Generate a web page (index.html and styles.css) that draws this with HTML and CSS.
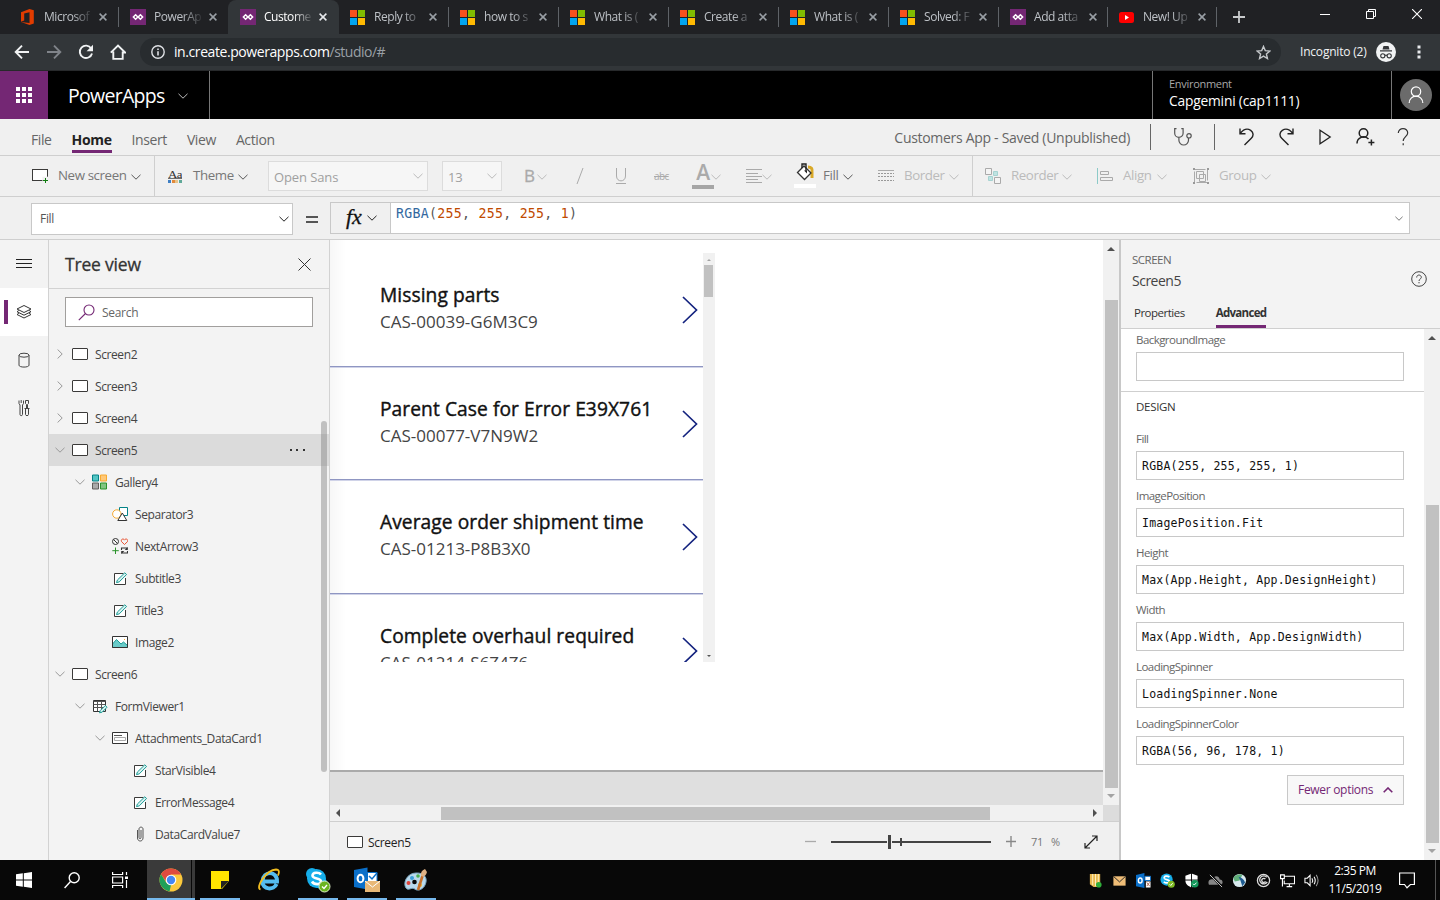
FILE: index.html
```html
<!DOCTYPE html>
<html lang="en">
<head>
<meta charset="utf-8">
<title>Customers App - PowerApps</title>
<link rel="stylesheet" href="styles.css">
</head>
<body>
<svg class="defs" width="0" height="0">
  <symbol id="chev" viewBox="0 0 10 6"><path d="M.5 .8 5 5.2 9.5 .8" fill="none" stroke="currentColor"/></symbol>
  <symbol id="right" viewBox="0 0 6 10"><path d="M.6 .5 5.2 5 .6 9.5" fill="none" stroke="currentColor"/></symbol>
  <symbol id="x" viewBox="0 0 8 8"><path d="M.6 .6 7.4 7.4M7.4 .6 .6 7.4" fill="none" stroke="currentColor" stroke-width="1.5"/></symbol>
  <symbol id="ms" viewBox="0 0 15 15"><path fill="#f8501d" d="M0 0h7v7H0z"/><path fill="#80bb01" d="M8 0h7v7H8z"/><path fill="#02a4ef" d="M0 8h7v7H0z"/><path fill="#ffb902" d="M8 8h7v7H8z"/></symbol>
  <symbol id="pa" viewBox="0 0 16 16"><path fill="#742774" d="M0 0h16v16H0z"/><path d="M5.6 5.8 7.8 8 5.6 10.2 3.4 8zM10.4 5.8 12.6 8 10.4 10.2 8.2 8z" fill="none" stroke="#fff" stroke-width="1.5"/></symbol>
  <symbol id="screen" viewBox="0 0 16 12"><rect x=".5" y=".5" width="15" height="11" rx=".5" fill="#fff" stroke="#3b3a39"/></symbol>
  <symbol id="edit" viewBox="0 0 14 14"><path d="M9.5 1.500H.5v11h11V6" fill="#fff" stroke="#3b3a39"/><path d="M2.500 10.600 3.400 8 10.800.8l1.800 1.700L5.200 9.900z" fill="#d8f0ef" stroke="#1a9c96"/></symbol>
  <symbol id="up" viewBox="0 0 8 4"><path d="M4 0l4 4H0z" fill="currentColor"/></symbol>
</svg>

<div class="tabs">
  <div class="tab"><svg class="fav" viewBox="0 0 16 16"><path d="M1 3.3 9.5 0l4.3 1.3v13.2L9.5 16 1 12.9l8.5 1V3.2L4.2 4.5v7L1 12.8z" fill="#e23c00"/></svg><span class="tt">Microsof</span><svg class="tx"><use href="#x"/></svg></div>
  <div class="tab nosep"><svg class="fav"><use href="#pa"/></svg><span class="tt">PowerAp</span><svg class="tx"><use href="#x"/></svg></div>
  <div class="tab nosep active"><svg class="fav"><use href="#pa"/></svg><span class="tt">Custome</span><svg class="tx"><use href="#x"/></svg></div>
  <div class="tab"><svg class="fav ms"><use href="#ms"/></svg><span class="tt">Reply to</span><svg class="tx"><use href="#x"/></svg></div>
  <div class="tab"><svg class="fav ms"><use href="#ms"/></svg><span class="tt">how to s</span><svg class="tx"><use href="#x"/></svg></div>
  <div class="tab"><svg class="fav ms"><use href="#ms"/></svg><span class="tt">What is (</span><svg class="tx"><use href="#x"/></svg></div>
  <div class="tab"><svg class="fav ms"><use href="#ms"/></svg><span class="tt">Create a</span><svg class="tx"><use href="#x"/></svg></div>
  <div class="tab"><svg class="fav ms"><use href="#ms"/></svg><span class="tt">What is (</span><svg class="tx"><use href="#x"/></svg></div>
  <div class="tab"><svg class="fav ms"><use href="#ms"/></svg><span class="tt">Solved: F</span><svg class="tx"><use href="#x"/></svg></div>
  <div class="tab tight"><svg class="fav"><use href="#pa"/></svg><span class="tt">Add atta</span><svg class="tx"><use href="#x"/></svg></div>
  <div class="tab tight"><svg class="fav yt" viewBox="0 0 15 11"><rect width="15" height="11" rx="2.5" fill="#f00"/><path d="M6 3v5l4-2.5z" fill="#fff"/></svg><span class="tt">New! Up</span><svg class="tx"><use href="#x"/></svg></div>
  <svg class="plus" viewBox="0 0 12 12"><path d="M6 0v12M0 6h12" stroke="#c8cacc" stroke-width="1.8"/></svg>
  <div class="win">
    <svg width="10" height="10"><path d="M0 5.5h10" stroke="#fff"/></svg>
    <svg width="10" height="10"><path d="M.5 2.5h7v7h-7zM2.5 2.5v-2h7v7h-2" fill="none" stroke="#fff"/></svg>
    <svg width="10" height="10"><path d="M0 0l10 10M10 0L0 10" stroke="#fff" stroke-width="1.1"/></svg>
  </div>
</div>

<div class="addr">
  <svg class="nav" viewBox="0 0 16 16"><path d="M15 8H2M8 1.7 1.7 8 8 14.3" fill="none" stroke="#f1f3f4" stroke-width="1.9"/></svg>
  <svg class="nav" viewBox="0 0 16 16"><path d="M1 8h13M8 1.7 14.3 8 8 14.3" fill="none" stroke="#80848a" stroke-width="1.9"/></svg>
  <svg class="nav" viewBox="0 0 16 16"><path d="M13.2 4.4A6.2 6.2 0 1 0 14 9.4" fill="none" stroke="#f1f3f4" stroke-width="1.9"/><path d="M15 .8v6.4H8.6z" fill="#f1f3f4"/></svg>
  <svg class="nav" viewBox="0 0 16 16"><path d="M3.3 7.5v7.4h9.4V7.5M.8 8.6 8 1.5l7.2 7.1h-3" fill="none" stroke="#f1f3f4" stroke-width="1.9"/></svg>
  <div class="omni">
    <svg width="14" height="14" viewBox="0 0 14 14"><circle cx="7" cy="7" r="6.2" fill="none" stroke="#dfe1e5" stroke-width="1.4"/><path d="M7 6.2v4.2M7 3.4V5" stroke="#dfe1e5" stroke-width="1.6"/></svg>
    <span class="url">in.create.powerapps.com<i>/studio/#</i></span>
    <svg class="star" width="15" height="15" viewBox="0 0 16 16"><path d="M8 1.5 9.9 6l4.9.4-3.7 3.2 1.1 4.8L8 11.9l-4.2 2.5 1.1-4.8L1.2 6.4 6.1 6z" fill="none" stroke="#c4c7ca" stroke-width="1.5"/></svg>
  </div>
  <span class="incog">Incognito (2)</span>
  <svg class="spy" width="20" height="20" viewBox="0 0 20 20"><circle cx="10" cy="10" r="10" fill="#f1f3f4"/><path d="M7.5 4h5l1 3.5h-7zM4 8.3h12v1.3H4z" fill="#35373a"/><g fill="none" stroke="#35373a" stroke-width="1.1"><circle cx="6.8" cy="13.8" r="2.1"/><circle cx="13.2" cy="13.8" r="2.1"/><path d="M8.9 13.5q1.1-.8 2.2 0"/></g></svg>
  <svg class="dots" width="4" height="14"><path d="M.5.5h3v3h-3zM.5 5.5h3v3h-3zM.5 10.5h3v3h-3z" fill="#e8eaed"/></svg>
</div>

<div class="head">
  <div class="waffle"><svg width="16" height="16"><path d="M0 0h4v4H0zM6 0h4v4H6zM12 0h4v4h-4zM0 6h4v4H0zM6 6h4v4H6zM12 6h4v4h-4zM0 12h4v4H0zM6 12h4v4H6zM12 12h4v4h-4z" fill="#fff"/></svg></div>
  <div class="brand"><span>PowerApps</span><svg class="chev"><use href="#chev"/></svg></div>
  <div class="env"><span class="el">Environment</span><span class="ev">Capgemini (cap1111)</span></div>
  <div class="user"><svg width="32" height="32" viewBox="0 0 32 32"><circle cx="16" cy="16" r="16" fill="#6b6b6b"/><circle cx="16" cy="12.6" r="4.7" fill="none" stroke="#fff" stroke-width="1.2"/><path d="M9.2 24a6.8 6.8 0 0 1 13.6 0" fill="none" stroke="#fff" stroke-width="1.2"/></svg></div>
</div>

<div class="menu">
  <span>File</span><span class="on">Home</span><span>Insert</span><span>View</span><span>Action</span>
  <span class="saved">Customers App - Saved (Unpublished)</span>
  <div class="health"><svg width="20" height="20" viewBox="0 0 20 20" fill="none" stroke="#555" stroke-width="1.2"><path d="M3.5 1.7H1.7v4.5a4.2 4.2 0 0 0 8.4 0V1.7H8.3M5.9 10.5v2.7a4.8 4.8 0 0 0 9.6 0V11"/><circle cx="16" cy="8.8" r="2.2"/></svg></div>
  <div class="acts">
    <svg width="18" height="20" viewBox="0 0 18 20"><path d="M2 1.5v5.2h5.5M2.3 6.3C5 2.9 9 1 12.7 3.3c3 2 3 5.6.6 8L6.5 18" fill="none" stroke="#222" stroke-width="1.4"/></svg>
    <svg width="18" height="20" viewBox="0 0 18 20"><path d="M16 1.5v5.2h-5.5M15.7 6.3C13 2.9 9 1 5.3 3.3c-3 2-3 5.6-.6 8l6.8 6.7" fill="none" stroke="#222" stroke-width="1.4"/></svg>
    <svg width="18" height="20" viewBox="0 0 18 20"><path d="M4 3.2 14.2 10 4 16.8z" fill="none" stroke="#222" stroke-width="1.3"/></svg>
    <svg width="20" height="20" viewBox="0 0 20 20"><circle cx="8.500" cy="6" r="4.300" fill="none" stroke="#222" stroke-width="1.500"/><path d="M2 16.500a6.600 6.600 0 0 1 11.500-4.400M16.400 12.500v6M13.400 15.500h6" fill="none" stroke="#222" stroke-width="1.500"/></svg>
    <svg width="14" height="20" viewBox="0 0 14 20"><path d="M2.300 6c0-6 9.600-5.600 9.400 0-.1 3.400-4.500 4-4.500 8M7.200 16.300v2" fill="none" stroke="#333" stroke-width="1.200"/></svg>
  </div>
</div>

<div class="ribbon">
  <div class="g sep"><svg class="ic" viewBox="0 0 16 14"><rect x=".5" y=".5" width="15" height="11" fill="#fff" stroke="#3b3a39"/><path d="M10.400 7.700h6v6h-6z" fill="#f0f0f0"/><path d="M13.500 9v5M11 11.500h5" stroke="#107c10"/></svg><span style="width:73px">New screen</span><svg class="chev"><use href="#chev"/></svg></div>
  <div class="g pad13"><svg class="aa" viewBox="0 0 14 14"><text x="0" y="9" font-size="10.500" font-family="Liberation Serif, serif" fill="#333" textLength="14" lengthAdjust="spacingAndGlyphs">Aa</text><path d="M0 9.500h14" stroke="#333" stroke-width=".7"/><path fill="#3f7fc4" d="M0 11h3v3H0z"/><path fill="#e28a3c" d="M4 11h3v3H4z"/><path fill="#e8c48a" d="M7 11h3v3H7z"/><path fill="#5fa898" d="M11 11h3v3h-3z"/></svg><span style="width:45px">Theme</span><svg class="chev"><use href="#chev"/></svg></div>
  <div class="g"><div class="sel s1"><span>Open Sans</span><svg class="chev"><use href="#chev"/></svg></div></div>
  <div class="g"><div class="sel s2"><span>13</span><svg class="chev"><use href="#chev"/></svg></div></div>
  <div class="g dis"><b class="bold">B</b><svg class="chev"><use href="#chev"/></svg></div>
  <div class="g dis"><svg width="12" height="18"><path d="M9 1 3 17" stroke="#aaa"/></svg></div>
  <div class="g dis"><svg width="14" height="18"><path d="M2.500 1v8c0 6.500 9 6.500 9 0V1M2 16.500h10" fill="none" stroke="#aaa"/></svg></div>
  <div class="g dis"><s>abc</s></div>
  <div class="g dis"><div class="fc">A</div><svg class="chev neg"><use href="#chev"/></svg></div>
  <div class="g dis"><svg width="16" height="14"><path d="M0 .5h16M0 4.500h12M0 7.500h16M0 10.500h12M0 13.500h16" stroke="#aaa"/></svg><svg class="chev"><use href="#chev"/></svg></div>
  <div class="g"><svg class="bucket" width="22" height="26" viewBox="0 0 22 26"><path d="M14 5q5 0 4 5v6" fill="none" stroke="#d9a928" stroke-width="3"/><path d="M3.500 10.500 10 4l7 7-6.500 6.500z" fill="#fff" stroke="#333" stroke-width="1.300"/><path d="M8 6V2h4v7" fill="none" stroke="#222" stroke-width="1.400"/><path d="M10 8.500h3v3z" fill="#222"/><path d="M0 22h22v4H0z" fill="#fff"/></svg><span style="width:20px">Fill</span><svg class="chev"><use href="#chev"/></svg></div>
  <div class="g dis sep"><svg class="ic" viewBox="0 0 16 12"><path d="M0 .5h16" stroke="#aaa"/><path d="M0 3.500h16M0 6.500h16M0 10.500h16" stroke="#999" stroke-dasharray="2 1"/></svg><span style="width:45px">Border</span><svg class="chev"><use href="#chev"/></svg></div>
  <div class="g dis pad12"><svg class="ic" viewBox="0 0 16 16"><path fill="#bfe3e2" stroke="#a6d3d1" d="M8.500 3.500h4v4h-4zM3.500 8.500h4v4h-4z"/><path fill="#f4f4f4" stroke="#aaa" d="M.5.5h6v6h-6zM9.500 9.500h6v6h-6z"/></svg><span style="width:51px">Reorder</span><svg class="chev"><use href="#chev"/></svg></div>
  <div class="g dis"><svg class="ic" viewBox="0 0 16 16"><path d="M.5 0v16" stroke="#8ccac8"/><path fill="none" stroke="#aaa" d="M3.500 3.500h8v3h-8zM3.500 9.500h12v3h-12z"/></svg><span style="width:34px">Align</span><svg class="chev"><use href="#chev"/></svg></div>
  <div class="g dis"><svg class="ic" viewBox="0 0 16 16"><path fill="none" stroke="#aaa" d="M1.500 1.500h13v13h-13z" stroke-dasharray="11 2"/><path fill="none" stroke="#aaa" d="M3.500 3.500h7v7h-7zM6.500 6.500h6v7h-6z"/><path fill="#999" d="M0 0h2v2H0zM14 0h2v2h-2zM0 14h2v2H0zM14 14h2v2h-2z"/></svg><span style="width:42px">Group</span><svg class="chev"><use href="#chev"/></svg></div>
</div>

<div class="formula">
  <div class="prop"><span>Fill</span><svg class="chev"><use href="#chev"/></svg></div>
  <svg class="eq" width="12" height="8"><path d="M0 1h12M0 6h12" stroke="#222" stroke-width="1.300"/></svg>
  <div class="fx"><em>fx</em><svg class="chev"><use href="#chev"/></svg></div>
  <div class="code"><span><i class="fn">RGBA</i>(<i>255</i>, <i>255</i>, <i>255</i>, <i>1</i>)</span><svg class="chev small"><use href="#chev"/></svg></div>
</div>

<div class="main">
  <div class="rail">
    <div><svg width="16" height="10"><path d="M0 .5h16M0 4.500h16M0 8.500h16" stroke="#222"/></svg></div>
    <div class="cur"><svg width="16" height="16" viewBox="0 0 16 16" fill="none" stroke="#333" stroke-width="1"><path d="M8 1.500 15 5 8 8.500 1 5zM2.800 6.500 1 7.700l7 3.500 7-3.500-1.800-1.200M2.800 9.300 1 10.500 8 14l7-3.500-1.800-1.200"/></svg></div>
    <div><svg width="12" height="16" viewBox="0 0 12 16" fill="none" stroke="#444"><ellipse cx="6" cy="3.200" rx="5" ry="2"/><path d="M1 3.200v10c0 2.500 10 2.500 10 0v-10"/></svg></div>
    <div><svg width="12" height="18" viewBox="0 0 12 18" fill="none" stroke="#444"><path d="M1 1.500v3l1 1.500v9.500c0 1.500 2.500 1.500 2.500 0V6l1-1.500v-3M3.200 1v3M7.500 1.500h3v3l-1 1V9M7.500 1.500v3l1 1V9M6.500 9.500h5M7.500 9.500v6c0 1.500 3 1.500 3 0v-6"/></svg></div>
  </div>

  <div class="tree">
    <div class="th"><span>Tree view</span><svg width="13" height="13"><path d="M.5.5l12 12M12.500.5l-12 12" stroke="#333"/></svg></div>
    <div class="search"><svg width="17" height="17" viewBox="0 0 17 17" fill="none" stroke="#742774" stroke-width="1.100"><circle cx="11" cy="6" r="5"/><path d="M7.500 9.500.8 16.200"/></svg><span>Search</span></div>
    <div class="rows">
      <div class="row"><svg class="rt"><use href="#right"/></svg><svg class="ti sc"><use href="#screen"/></svg>Screen2</div>
      <div class="row"><svg class="rt"><use href="#right"/></svg><svg class="ti sc"><use href="#screen"/></svg>Screen3</div>
      <div class="row"><svg class="rt"><use href="#right"/></svg><svg class="ti sc"><use href="#screen"/></svg>Screen4</div>
      <div class="row hit"><svg class="dn"><use href="#chev"/></svg><svg class="ti sc"><use href="#screen"/></svg>Screen5<svg class="more" width="15" height="2"><path d="M0 0h2v2H0zM6 0h2v2H6zM13 0h2v2h-2z" fill="#333"/></svg></div>
      <div class="row l1"><svg class="dn"><use href="#chev"/></svg><svg class="ti" viewBox="0 0 16 16"><g transform="translate(0 .5)"><path fill="#54c5c4" stroke="#038387" d="M.5.5h6v6h-6z"/><path fill="#ffc878" stroke="#f7a930" d="M8.500.5h6v6h-6z"/><path fill="#aaa" stroke="#605e5c" d="M.5 8.500h6v6h-6z"/><path fill="#82c482" stroke="#2b932b" d="M8.500 8.500h6v6h-6z"/></g></svg>Gallery4</div>
      <div class="row l2"><i class="dn"></i><svg class="ti" viewBox="0 0 16 16"><path d="M7.500 1.500h8v8h-8z" fill="#fff" stroke="#038387"/><circle cx="4.800" cy="8" r="4.200" fill="#fff" stroke="#f7a930"/><path d="M10.300 7 5.800 14.500h9z" fill="#fff" stroke="#333"/></svg>Separator3</div>
      <div class="row l2"><i class="dn"></i><svg class="ti" viewBox="0 0 16 16" fill="none"><circle cx="3.500" cy="3.500" r="3" stroke="#333"/><path d="M1.500 1.500l4 4" stroke="#333"/><path d="M12.500 6.500 9.500 3.600c-1-2.500 2-3.500 3-1.500 1-2 4-1 3 1.500z" stroke="#e8502f"/><path d="M3.500 9.500v6.500M.3 12.700h6.500" stroke="#2b932b"/><path d="M9.500 12v-2h5.500v1.500M15.500 13v2H10v-1.500" stroke="#333" stroke-width="1.100"/><path d="M15.700 9v3h-3zM9.300 16v-3h3z" fill="#333"/></svg>NextArrow3</div>
      <div class="row l2"><i class="dn"></i><svg class="ti ed"><use href="#edit"/></svg>Subtitle3</div>
      <div class="row l2"><i class="dn"></i><svg class="ti ed"><use href="#edit"/></svg>Title3</div>
      <div class="row l2"><i class="dn"></i><svg class="ti sc" viewBox="0 0 16 12"><path d="M.5.5h15v11H.5z" fill="#fff"/><path d="M.5 8 4.500 3.500 9 8l2.500-2 4 3.500v2H.5z" fill="#69cbc9" stroke="#1a9c96"/><path d="M12 3h1v1h-1z" fill="#f7a930"/><path d="M.5.5h15v11H.5z" fill="none" stroke="#333"/></svg>Image2</div>
      <div class="row"><svg class="dn"><use href="#chev"/></svg><svg class="ti sc"><use href="#screen"/></svg>Screen6</div>
      <div class="row l1"><svg class="dn"><use href="#chev"/></svg><svg class="ti" viewBox="0 0 16 16"><path d="M1.500 2.500h12v11h-12z" fill="#fff" stroke="#333"/><path d="M1.500 3.500h12M1.500 6.500h12M1.500 9.500h12M5.500 4v9M9.500 4v9" stroke="#555"/><path d="M7.500 14.800 8.300 12.500l5-5 1.800 1.700-5 5z" fill="#d8f0ef" stroke="#1a9c96"/></svg>FormViewer1</div>
      <div class="row l2"><svg class="dn"><use href="#chev"/></svg><svg class="ti sc" viewBox="0 0 16 12"><path d="M.5.5h15v11H.5z" fill="#fff" stroke="#333"/><path d="M2 3.500h8" stroke="#555"/><path d="M2.500 5.500h11v3h-11z" fill="none" stroke="#aaa"/></svg>Attachments_DataCard1</div>
      <div class="row l3"><i class="dn"></i><svg class="ti ed"><use href="#edit"/></svg>StarVisible4</div>
      <div class="row l3"><i class="dn"></i><svg class="ti ed"><use href="#edit"/></svg>ErrorMessage4</div>
      <div class="row l3"><i class="dn"></i><svg class="ti" viewBox="0 0 16 16" fill="none" stroke="#555"><path d="M9 4v7.500c0 1.500-2 1.500-2 0V3c0-2.500 4-2.500 4 0v9c0 4-5.500 4-5.500 0V4"/></svg>DataCardValue7</div>
      <div class="row l3"><i class="dn"></i><svg class="ti ed"><use href="#edit"/></svg></div>
    </div>
    <div class="tthumb"></div>
  </div>

  <div class="stage">
    <div class="work">
      <div class="canvas">
        <div class="gallery">
          <div class="items">
            <div class="item"><div><h3>Missing parts</h3><p>CAS-00039-G6M3C9</p></div><svg width="16" height="28"><path d="M1 1l13.500 13L1 27" fill="none" stroke="#14237f" stroke-width="1.700"/></svg></div>
            <div class="item"><div><h3>Parent Case for Error E39X761</h3><p>CAS-00077-V7N9W2</p></div><svg width="16" height="28"><path d="M1 1l13.500 13L1 27" fill="none" stroke="#14237f" stroke-width="1.700"/></svg></div>
            <div class="item"><div><h3>Average order shipment time</h3><p>CAS-01213-P8B3X0</p></div><svg width="16" height="28"><path d="M1 1l13.500 13L1 27" fill="none" stroke="#14237f" stroke-width="1.700"/></svg></div>
            <div class="item"><div><h3>Complete overhaul required</h3><p>CAS-01214-S6Z4Z6</p></div><svg width="16" height="28"><path d="M1 1l13.500 13L1 27" fill="none" stroke="#14237f" stroke-width="1.700"/></svg></div>
          </div>
          <div class="gbar"><svg class="tiny dim"><use href="#up"/></svg><div class="gthumb"></div><svg class="tiny flip"><use href="#up"/></svg></div>
        </div>
      </div>
      <div class="vbar v1"><svg class="arr"><use href="#up"/></svg><div class="thumb"></div><svg class="arr flip dim"><use href="#up"/></svg></div>
    </div>
    <div class="hrow">
      <div class="hbar"><svg class="arr lt"><use href="#up"/></svg><div class="thumb"></div><svg class="arr rtt"><use href="#up"/></svg></div>
      <div class="corner"></div>
    </div>
    <div class="status">
      <svg width="16" height="12"><use href="#screen"/></svg><span class="sn">Screen5</span>
      <svg width="11" height="11"><path d="M0 5.500h11" stroke="#aaa" stroke-width="1.300"/></svg>
      <svg class="slide" width="160" height="14"><path d="M0 7h160" stroke="#444" stroke-width="2"/><path d="M56 0h5v14h-5z" fill="#f0f0f0"/><path d="M57 0h3v14h-3z" fill="#444"/><path d="M70 3v8" stroke="#444" stroke-width="2"/></svg>
      <svg class="pl" width="10" height="11"><path d="M0 5.500h10M5 0v11" stroke="#888" stroke-width="1.400"/></svg>
      <span class="zv">71</span><span class="zp">%</span>
      <svg width="14" height="14"><path d="M1 13 13 1M8 1h5v5M1 8v5h5" fill="none" stroke="#222" stroke-width="1.200"/></svg>
    </div>
  </div>

  <div class="panel">
    <div class="ph">
      <div class="pt"><div><div class="k">SCREEN</div><div class="n">Screen5</div></div><svg width="16" height="16" viewBox="0 0 16 16" fill="none" stroke="#444"><circle cx="8" cy="8" r="7.300"/><path d="M5.700 6.500c0-3.500 4.800-3 4.600 0C10.200 8 8 8 8 10M8 11v1.300"/></svg></div>
      <div class="ptabs"><span>Properties</span><span class="on">Advanced</span></div>
    </div>
    <div class="pb">
      <div class="fields">
        <div class="f first"><label>BackgroundImage</label><div class="in"></div></div>
        <div class="sec">DESIGN</div>
        <div class="f"><label>Fill</label><div class="in">RGBA(255, 255, 255, 1)</div></div>
        <div class="f"><label>ImagePosition</label><div class="in">ImagePosition.Fit</div></div>
        <div class="f"><label>Height</label><div class="in">Max(App.Height, App.DesignHeight)</div></div>
        <div class="f"><label>Width</label><div class="in">Max(App.Width, App.DesignWidth)</div></div>
        <div class="f"><label>LoadingSpinner</label><div class="in">LoadingSpinner.None</div></div>
        <div class="f"><label>LoadingSpinnerColor</label><div class="in">RGBA(56, 96, 178, 1)</div></div>
        <div class="fewer"><span>Fewer options</span><svg width="10" height="6" viewBox="0 0 10 6"><path d="M.7 5.300 5 1l4.300 4.300" fill="none" stroke="#742774" stroke-width="1.600"/></svg></div>
      </div>
      <div class="vbar v2"><svg class="arr"><use href="#up"/></svg><div class="thumb"></div><svg class="arr flip dim"><use href="#up"/></svg></div>
    </div>
  </div>
</div>

<div class="taskbar">
  <div class="tk"><svg width="16" height="16"><path d="M0 2.300 6.800 1.300v6.200H0zM7.800 1.200 16 0v7.500H7.800zM0 8.500h6.800v6.200L0 13.700zM7.800 8.500H16V16l-8.200-1.200z" fill="#fff"/></svg></div>
  <div class="tk"><svg width="16" height="17" viewBox="0 0 16 17" fill="none" stroke="#fff" stroke-width="1.400"><circle cx="10.200" cy="5.800" r="5"/><path d="M6.500 9.500.6 16"/></svg></div>
  <div class="tk"><svg width="16" height="16" fill="none" stroke="#fff" stroke-width="1.200"><path d="M.6 0v2.500h10V0M.6 5h10v6H.6zM.6 16v-2.500h10V16M14.500 0v3M14.500 8v8"/><path d="M13 4.500h3v2.500h-3z" fill="#fff" stroke="none"/></svg></div>
  <div class="tk run lit"><svg width="24" height="24" viewBox="0 0 24 24"><circle cx="12" cy="12" r="11.500" fill="#fbc93c"/><path d="M2 6.300A11.500 11.500 0 0 1 22 6.500H12L8 15z" fill="#df4b3f"/><path d="M2 6.300 7.500 15 12 17l-1.500 6.400A11.500 11.500 0 0 1 2 6.300z" fill="#1fa05a"/><circle cx="12" cy="12" r="5.300" fill="#fff"/><circle cx="12" cy="12" r="4.200" fill="#4587f3"/></svg></div>
  <div class="tk run n m5"><svg width="18" height="18"><path d="M0 0h18v10l-7 8H0z" fill="#ffe400"/><path d="M10 18v-8h8z" fill="#222"/></svg></div>
  <div class="tk n m9"><svg width="24" height="24" viewBox="0 0 24 24"><path d="M5 13.500h15c.7-11-14-11-14.500 0C5.300 22 17 22.500 19.500 16" fill="none" stroke="#55bdf0" stroke-width="4"/><path d="M8 10.500c1.500-4.500 8-4 8.500 0z" fill="#080808"/><path d="M3.500 21.500C-2 20 9 2 19 1.500c3.500 0 3.500 3 2 6" fill="none" stroke="#f0bc20" stroke-width="1.800"/></svg></div>
  <div class="tk run n m9"><svg width="26" height="26" viewBox="0 0 26 26"><circle cx="7" cy="7" r="6" fill="#16aeea"/><circle cx="16" cy="16" r="6" fill="#16aeea"/><circle cx="11.500" cy="11.500" r="9.500" fill="#16aeea"/><path d="M16 7.500c-2-2.500-8.500-2.500-8.500 1 0 4 8.500 2 8.500 6 0 3.500-7 3.500-9 0" fill="none" stroke="#fff" stroke-width="2.600"/><circle cx="19.500" cy="19.500" r="5.500" fill="#6bb420" stroke="#dcedc8"/><path d="m17 19.500 2 2 3-3.500" fill="none" stroke="#fff" stroke-width="1.400"/></svg></div>
  <div class="tk run n m9"><svg width="26" height="26" viewBox="0 0 26 26"><path d="M0 3 13.500.5v22L0 20z" fill="#0a6fc9"/><path d="M13.500 5.500H23V18h-9.500z" fill="#fff" stroke="#0a6fc9"/><path d="m15 9 3 3 5-6" fill="none" stroke="#0a6fc9" stroke-width="1.500"/><ellipse cx="6.500" cy="11.500" rx="2.900" ry="3.700" fill="none" stroke="#fff" stroke-width="2"/><path d="M11 14h15v11H11z" fill="#e8b877"/><path d="m11 14 7.500 6 7.500-6" fill="none" stroke="#fff"/></svg></div>
  <div class="tk run n m9"><svg width="24" height="25" viewBox="0 0 24 25"><path d="M12 5C3 5-1.500 15 2 20c2.500 3 5-.5 8 .5 3 3 8 1.500 10.500-2.500C25 10 20 4.500 12 5z" fill="#b9d9ec" stroke="#7aa6c0"/><circle cx="4.500" cy="15" r="2" fill="#e0453a"/><circle cx="8" cy="10" r="2" fill="#3a9fd8"/><circle cx="14" cy="8" r="1.800" fill="#4aaf50"/><circle cx="10.500" cy="14" r="2.300" fill="#080808"/><circle cx="16" cy="17" r="2" fill="#f2b632"/><path d="m14 22 4.500-14" stroke="#c8702a" stroke-width="2.600"/><path d="M17 8q-1-5 4-7l2 3q-1 4-4 4.500z" fill="#dfb184"/></svg></div>
  <div class="tray">
    <i><svg viewBox="0 0 16 16"><path d="M2 1h11v10l-3 4H6l-4-3z" fill="#e9b950"/><path d="M5 1v12M8 1v13M11 1v10" stroke="#fff2c5"/><circle cx="11.500" cy="12.500" r="3" fill="#2fae3b"/></svg></i>
    <i><svg viewBox="0 0 16 16"><path d="M1.500 3.500h13v10h-13z" fill="#efbd77"/><path d="m1.500 3.500 6.500 6 6.500-6" fill="none" stroke="#222"/></svg></i>
    <i><svg viewBox="0 0 16 16"><path d="M0 2 9 0v16l-9-2z" fill="#0a6fc9"/><ellipse cx="4.500" cy="8" rx="2" ry="2.700" fill="none" stroke="#fff" stroke-width="1.500"/><path d="M9.500 3.500h6V8h-6z" fill="#fff" stroke="#0a6fc9"/><path d="M10.500 9h5v6.500h-5z" fill="#fff"/><path d="m11.500 10 3 4M14.500 10l-3 4" stroke="#a65"/></svg></i>
    <i><svg viewBox="0 0 16 16"><circle cx="7" cy="7" r="6.500" fill="#16aeea"/><path d="M10 4.500c-2-2-6-1.500-5.500 1 .5 2 5.500 1 5.500 3.500 0 2-4 2-6 .5" fill="none" stroke="#fff" stroke-width="1.800"/><circle cx="12" cy="12" r="3.800" fill="#7fba25"/><path d="m10.300 12 1.200 1.300 2-2.500" fill="none" stroke="#fff"/></svg></i>
    <i><svg viewBox="0 0 16 16"><path d="M8 .5 14.500 3v5c0 4-3 6-6.500 7.500C4.500 14 1.500 12 1.500 8V3z" fill="#fff"/><path d="M8 0v16M1 7.500h14" stroke="#080808"/><circle cx="11.500" cy="11.500" r="4" fill="#14985b"/><path d="m9.700 11.500 1.300 1.300 2.300-2.500" fill="none" stroke="#fff"/></svg></i>
    <i><svg viewBox="0 0 16 16"><path d="M1 12.500C-1 8 3 6 5 7c1-5 7-4.500 7.500 0 4 0 4 5.500.5 5.500z" fill="#858585"/><path d="m2 1 13 14" stroke="#080808" stroke-width="2.500"/><path d="m2 2 13 13" stroke="#ccc"/></svg></i>
    <i><svg viewBox="0 0 16 16"><circle cx="8" cy="8" r="7" fill="#d8e9ee"/><path d="M2 4q5-4 9-2L8 8 3 9Q1 7 2 4z" fill="#5fae78"/><path d="M7 4q5 1 7 6l-3 4-2-6z" fill="#1d5b91"/></svg></i>
    <i><svg viewBox="0 0 16 16" fill="none" stroke="#ddd" stroke-width="1.400"><circle cx="8" cy="8" r="6.500"/><path d="M11.500 4.500A4.300 4.300 0 1 0 12 9.500M10 6.500A2.200 2.200 0 1 0 10.200 9"/></svg></i>
    <i><svg viewBox="0 0 16 16" fill="none" stroke="#fff" stroke-width="1.200"><path d="M4.500 3.500h11v8h-11V8M7 14.500h6M10 11.500v3M.6 2h4v4h-4zM2.600 6v8.500"/></svg></i>
    <i><svg viewBox="0 0 16 16" fill="none" stroke="#fff" stroke-width="1.100"><path d="M1 5.500h2.500l3-3v11l-3-3H1zM8.500 5.500q1.500 2.500 0 5M10.700 4q2.500 4 0 8"/><path d="M13 2q4 6 0 12" stroke="#999"/></svg></i>
  </div>
  <div class="clock"><span>2:35 PM</span><span>11/5/2019</span></div>
  <div class="ac"><svg width="16" height="17"><path d="M.6 1h14.800v11.500h-4L8 15.800l-2.500-3.300H.6z" fill="none" stroke="#fff" stroke-width="1.200"/></svg></div>
  <div class="peek"></div>
</div>
</body>
</html>
```
FILE: styles.css
```css
* { box-sizing: border-box; }
body {
  margin: 0; width: 1440px; height: 900px; overflow: hidden;
  display: flex; flex-direction: column;
  font: 12px/16px "Open Sans", "Noto Sans", sans-serif;
  letter-spacing: -.3px; color: #333; background: #f0f0f0;
}
svg { display: block; flex: none; }
i { font-style: normal; }
.defs { position: absolute; }
.chev { width: 10px; height: 6px; color: #555; }

/* browser tabs */
.tabs { height: 34px; flex: none; background: #202124; display: flex; padding-left: 9px; }
.tab { width: 110px; height: 34px; display: flex; align-items: center; padding: 0 0 0 11px; background: linear-gradient(#5f6368, #5f6368) right 0 top 7px / 1px 20px no-repeat; }
.tab.nosep { background-image: none; }
.tab.tight { width: 109px; }
.tab.active { background: #323639; border-radius: 8px 8px 0 0; width: 111px; margin-left: -1px; padding-left: 12px; }
.fav { width: 16px; height: 16px; }
.fav.ms { width: 15px; height: 15px; margin-right: 1px; }
.fav.yt { width: 15px; height: 11px; margin-right: 1px; }
.tt { width: 50px; margin-left: 8px; white-space: nowrap; letter-spacing: -.45px; color: #bdc1c6; -webkit-mask-image: linear-gradient(90deg, #000 58%, rgba(0,0,0,.08) 96%); mask-image: linear-gradient(90deg, #000 58%, rgba(0,0,0,.08) 96%); }
.active .tt { color: #fff; }
.tx { width: 8px; height: 8px; margin-left: 5px; color: #9aa0a6; }
.active .tx { color: #e8eaed; }
.plus { width: 12px; height: 12px; margin: 11px 0 0 16px; }
.win { margin-left: auto; display: flex; gap: 36px; padding: 9px 18px 0 0; }

.addr { height: 37px; flex: none; background: #323639; border-bottom: 1px solid #27292b; display: flex; align-items: center; padding-left: 14px; }
.nav { width: 16px; height: 16px; margin-right: 16px; }
.omni { width: 1141px; height: 28px; margin-left: -2px; border-radius: 14px; background: #282c2f; display: flex; align-items: center; padding: 0 10px 0 11px; }
.url { margin-left: 9px; font-size: 14px; color: #fff; letter-spacing: -.42px; }
.url i { color: #9aa0a6; letter-spacing: -.5px; }
.star { margin-left: auto; }
.incog { width: 76px; margin-left: 19px; color: #f1f3f4; white-space: nowrap; letter-spacing: -.2px; }
.dots { margin-left: 21px; }

/* app header */
.head { height: 48px; flex: none; background: #000; display: flex; }
.waffle { width: 48px; background: #742774; display: grid; place-items: center; }
.brand { width: 162px; border-right: 1px solid #777; display: flex; align-items: center; padding: 2px 21px 0 20px; justify-content: space-between; color: #fff; font-size: 19.500px; letter-spacing: -.72px; }
.brand .chev { color: #bbb; }
.env { margin-left: auto; width: 240px; border-left: 1px solid #777; border-right: 1px solid #777; padding: 5px 0 0 16px; display: flex; flex-direction: column; }
.el { color: #a8a8a8; font-size: 11px; letter-spacing: -.3px; }
.ev { color: #fff; font-size: 13.800px; line-height: 18px; letter-spacing: -.2px; }
.user { width: 48px; display: grid; place-items: center; }

/* menu */
.menu { height: 37px; flex: none; border-bottom: 1px solid #cfcfcf; display: flex; gap: 20px; padding-left: 31px; font-size: 14px; line-height: 20px; color: #666; letter-spacing: -.4px; }
.menu > span { padding-top: 11px; height: 34px; white-space: nowrap; }
.menu .on { font-weight: 700; color: #222; border-bottom: 3px solid #742774; letter-spacing: -.35px; }
.menu .saved { margin-left: auto; padding-top: 9px; letter-spacing: -.3px; }
.health { width: 65px; height: 26px; margin-top: 5px; border: solid #666; border-width: 0 1px; display: grid; place-items: center; }
.acts { display: flex; align-items: center; width: 202px; height: 36px; padding-right: 30px; margin-left: 3px; justify-content: space-between; }

/* ribbon */
.ribbon { height: 41px; flex: none; border-bottom: 1px solid #cfcfcf; display: grid; grid-template-columns: 123px 113px 174px 82px 50px 40px 40px 38px 54px 48px 84px 95px 124px 96px 110px; padding-left: 32px; font-size: 13.300px; line-height: 18px; color: #777; letter-spacing: -.4px; }
.g { display: flex; align-items: center; white-space: nowrap; }
.g > span { margin-top: -2px; }
.g.sep { border-right: 1px solid #cfcfcf; }
.pad13 { padding-left: 13px; }
.pad12 { padding-left: 12px; }
.ic { width: 16px; height: 16px; margin-right: 10px; }
.aa { width: 14px; height: 14px; margin-right: 11px; }
.g > .chev { margin-top: 1px; }
.dis { color: #bbb; }
.dis .chev { color: #bbb; }
.sel { height: 30px; border: 1px solid #dcdcdc; background: #f6f6f6; display: flex; align-items: center; justify-content: space-between; color: #a0a0a0; padding: 0 4px 0 5px; font-size: 13px; }
.sel span { padding-top: 2px; letter-spacing: -.1px; }
.sel .chev { color: #bbb; }
.s1 { width: 160px; }
.s2 { width: 60px; }
.bold { font-size: 17px; font-weight: 400; color: #aaa; width: 13px; -webkit-text-stroke: .3px #aaa; }
.ribbon s { font-size: 10px; color: #aaa; letter-spacing: -.6px; }
.fc { width: 22px; height: 27px; margin-top: -2px; border-bottom: 4px solid #a6a6a6; font-size: 21px; line-height: 20px; text-align: center; color: #aaa; font-weight: 600; }
.neg { margin-left: -3px; }
.bucket { margin: -2px 7px 0 0; }

/* formula bar */
.formula { height: 43px; flex: none; border-bottom: 1px solid #cfcfcf; display: flex; align-items: flex-start; padding: 5px 30px 0 31px; }
.prop { width: 262px; height: 32px; margin-top: 1px; background: #fff; border: 1px solid #c8c8c8; display: flex; align-items: center; justify-content: space-between; padding: 0 3px 0 8px; color: #555; }
.prop .chev, .fx .chev { color: #222; }
.eq { margin: 14px 12px 0 13px; }
.fx { width: 60px; height: 32px; border: 1px solid #c8c8c8; border-right: 0; display: flex; align-items: center; padding-left: 15px; gap: 4px; }
.fx em { font: italic 22px/20px "Liberation Serif", serif; color: #111; width: 17px; letter-spacing: 0; -webkit-text-stroke: .3px #111; margin-top: -2px; }
.code { flex: 1; height: 32px; background: #fff; border: 1px solid #c8c8c8; display: flex; align-items: center; justify-content: space-between; padding: 0 6px 0 5px; font: 13.200px/16px "DejaVu Sans Mono", monospace; letter-spacing: .3px; color: #555; }
.code span { margin-top: -8px; white-space: pre; }
.code i { color: #c04a00; }
.code .fn { color: #33689f; }
.small { width: 8px; height: 5px; }

/* main */
.main { height: 620px; flex: none; display: flex; }
.rail { width: 49px; background: #f3f3f3; border-right: 1px solid #d2d2d2; }
.rail div { height: 48px; display: grid; place-items: center; }
.rail .cur { background: linear-gradient(#742774, #742774) 4px 12px / 4px 24px no-repeat #fff; }
.tree { width: 281px; position: relative; background: #f3f3f3; border-right: 1px solid #d2d2d2; overflow: hidden; }
.th { height: 49px; border-bottom: 1px solid #d2d2d2; display: flex; align-items: center; justify-content: space-between; padding: 0 18px 0 16px; font-size: 17.500px; letter-spacing: -.2px; color: #333; -webkit-text-stroke: .3px #333; }
.search { height: 30px; margin: 8px 16px 11px; border: 1px solid #a19f9d; background: #fff; display: flex; align-items: center; padding-left: 12px; gap: 7px; color: #666; }
.search span { padding-top: 1px; }
.row { height: 32px; display: flex; align-items: center; padding: 2px 0 0 6px; color: #444; letter-spacing: -.4px; }
.l1 { padding-left: 26px; }
.l2 { padding-left: 46px; }
.l3 { padding-left: 66px; }
.rt { width: 6px; height: 10px; margin: 0 9px 0 2px; color: #999; }
.dn { width: 10px; height: 6px; margin-right: 7px; color: #999; }
.ti { width: 16px; height: 16px; margin-right: 7px; }
.ti.sc { height: 12px; }
.ti.ed { width: 14px; height: 14px; margin: 0 7px 0 2px; }
.row > svg { margin-top: -2px; }
.hit { background: #dbdbdb; }
.more { margin: 0 24px 0 auto; }
.tthumb { position: absolute; right: 2px; top: 181px; width: 6px; height: 351px; border-radius: 3px; background: rgba(130,130,130,.45); }

.stage { width: 789px; display: flex; flex-direction: column; }
.work { height: 565px; display: flex; background: #dfdfdf; }
.canvas { width: 773px; height: 532px; background: linear-gradient(90deg, rgba(0,0,0,.03), transparent 16px) #fff; border-bottom: 2px solid #aaa; padding-top: 13px; }
.gallery { width: 385px; height: 409px; display: flex; overflow: hidden; }
.items { width: 373px; padding-top: .3px; }
.item { height: 113.600px; border-bottom: 1px solid #8f96c2; box-shadow: 0 1px #d0d3e8; padding: 29px 5px 0 50px; display: flex; justify-content: space-between; }
.item h3 { margin: 0; font-size: 19.200px; line-height: 26px; font-weight: 400; color: #111; letter-spacing: .07px; white-space: nowrap; -webkit-text-stroke: .4px #111; }
.item p { margin: 2px 0 0; font-size: 17px; line-height: 24px; color: #444; letter-spacing: 0; }
.item svg { margin-top: 14px; }
.gbar { width: 12px; background: #f1f1f1; display: flex; flex-direction: column; padding: 6px 0 5px 1px; }
.gthumb { width: 9px; height: 32px; margin: 4px 0 auto; background: #c1c1c1; }
.tiny { width: 4px; height: 2px; margin-left: 3px; color: #555; }
.flip { transform: rotate(180deg); }
.dim { color: #a3a3a3; }
.vbar { width: 16px; background: #f1f1f1; display: flex; flex-direction: column; align-items: center; padding: 7px 0; }
.arr { width: 8px; height: 4px; color: #505050; }
.arr.dim { color: #a3a3a3; }
.thumb { background: #c1c1c1; }
.v1 .thumb { width: 13px; height: 488px; margin: 49px 0 auto 0; }
.v2 .thumb { width: 13px; height: 338px; margin: 165px 0 auto 0; }
.hrow { height: 16px; display: flex; }
.hbar { width: 773px; background: #f1f1f1; display: flex; align-items: center; padding: 0 4px; }
.hbar .thumb { width: 549px; height: 13px; margin: 0 auto 0 99px; }
.lt { transform: rotate(-90deg); }
.rtt { transform: rotate(90deg); }
.corner { width: 16px; background: #dcdcdc; }
.status { height: 39px; border-top: 1px solid #cfcfcf; background: #f0f0f0; display: flex; align-items: center; padding: 1px 0 0 17px; color: #222; }
.sn { margin-left: 5px; width: 437px; padding-top: 2px; }
.slide { margin-left: 15px; }
.pl { margin-left: 15px; }
.zv { margin-left: 15px; width: 20px; color: #777; font-size: 11px; }
.zp { width: 33px; color: #777; font-size: 11px; }

.panel { flex: 1; border-left: 2px solid #c8c8c8; background: #fff; }
.ph { height: 89px; background: #f3f3f3; border-bottom: 1px solid #cfcfcf; padding: 12px 13px 0 11px; }
.pt { display: flex; justify-content: space-between; height: 53px; align-items: center; padding-bottom: 13px; }
.k { color: #666; font-size: 11.500px; letter-spacing: -.5px; }
.n { font-size: 14px; line-height: 26px; margin-bottom: -2px; color: #444; letter-spacing: -.5px; }
.pt svg { margin-top: 14px; }
.ptabs { display: flex; gap: 31px; padding-left: 2px; font-size: 11.500px; letter-spacing: -.5px; }
.ptabs span { height: 23px; }
.ptabs .on { font-weight: 700; border-bottom: 3px solid #742774; letter-spacing: -.7px; }
.pb { display: flex; height: 531px; }
.fields { width: 303px; padding-top: 2px; }
.f { margin: 0 20px 7px 15px; height: 50px; }
.f label { display: block; height: 18px; line-height: 18px; color: #666; font-size: 11.500px; letter-spacing: -.55px; }
.f .in { height: 29px; margin-top: 3px; border: 1px solid #c8c8c8; padding: 0 5px; font: 11.500px/28px "DejaVu Sans Mono", monospace; letter-spacing: .22px; color: #111; white-space: pre; }
.f.first { margin-bottom: 10px; }
.sec { border-top: 1px solid #cfcfcf; height: 39px; padding: 7px 15px 0; font-size: 11.500px; }
.fewer { width: 117px; height: 30px; margin: 10px 20px 0 auto; border: 1px solid #c8c8c8; background: #f8f8f8; display: flex; align-items: center; justify-content: space-between; padding: 0 10px; color: #742774; }

/* taskbar */
.taskbar { height: 40px; flex: none; background: #080808; display: flex; }
.tk { width: 48px; height: 40px; display: grid; place-items: center; }
.lit { margin-left: 3px; background: linear-gradient(#080808, #080808) 44px 0 / 1px 100% no-repeat #3a3a3a; }
.run { border-bottom: 2px solid #76b9ed; padding-top: 2px; }
.tk.n { width: 40px; }
.m5 { margin-left: 5px; }
.m9 { margin-left: 9px; }
.tray { margin-left: auto; display: flex; }
.tray i { width: 24px; display: grid; place-items: center; }
.tray svg { width: 15px; height: 15px; }
.clock { width: 64px; display: flex; flex-direction: column; align-items: center; color: #fff; line-height: 18px; padding-top: 2px; letter-spacing: -.45px; }
.ac { width: 40px; display: grid; place-items: center; }
.peek { width: 13px; background: linear-gradient(#555, #555) 8px 0 / 1px 100% no-repeat; }
```
